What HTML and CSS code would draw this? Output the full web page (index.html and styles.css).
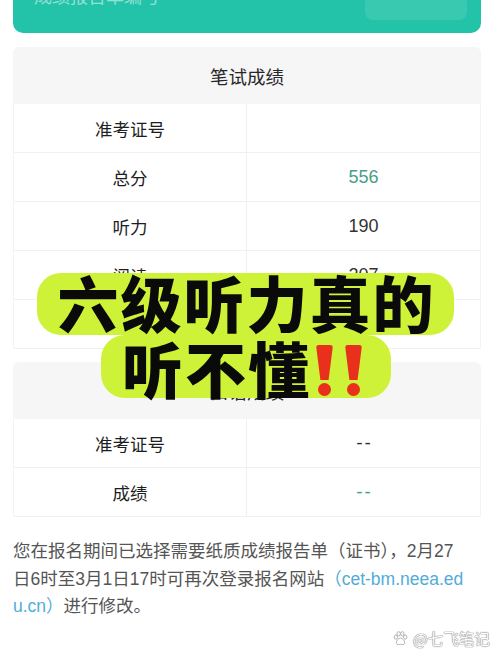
FILE: index.html
```html
<!DOCTYPE html>
<html lang="zh-CN">
   <head>
      <meta charset="UTF-8"/>
      <title>成绩查询</title>
      <link rel="stylesheet" href="styles.css">
   </head>

   <body>
      <div class="page">
         <div class="report-bar">
            <span class="report-label">成绩报告单编号</span>
            <span class="report-btn"></span>
         </div>

         <div class="score-block">
            <div class="score-head">笔试成绩</div>
            <div class="score-rows">
               <div class="score-row">
                  <div class="cell label">准考证号</div>
                  <div class="cell value"></div>
               </div>
               <div class="score-row">
                  <div class="cell label">总分</div>
                  <div class="cell value green">556</div>
               </div>
               <div class="score-row">
                  <div class="cell label">听力</div>
                  <div class="cell value">190</div>
               </div>
               <div class="score-row">
                  <div class="cell label">阅读</div>
                  <div class="cell value">207</div>
               </div>
               <div class="score-row">
                  <div class="cell label">写作和翻译</div>
                  <div class="cell value">159</div>
               </div>
            </div>
         </div>

         <div class="score-block second">
            <div class="score-head">口语成绩</div>
            <div class="score-rows">
               <div class="score-row">
                  <div class="cell label">准考证号</div>
                  <div class="cell value dash">--</div>
               </div>
               <div class="score-row">
                  <div class="cell label">成绩</div>
                  <div class="cell value dash green">--</div>
               </div>
            </div>
         </div>

         <p class="notice">
            您在报名期间已选择需要纸质成绩报告单（证书），2月27<br>日6时至3月1日17时可再次登录报名网站<span class="link">（cet-bm.neea.ed<br>u.cn）</span>进行修改。
         </p>

         <div class="sticker">
            <div class="sticker-line first">六级听力真的</div>
            <div class="sticker-line second">
               <span class="sticker-text">听不懂</span>
               <span class="bang" title="!!">
                  <span class="mark"></span>
                  <span class="mark"></span>
               </span>
            </div>
         </div>
      </div>

      <div class="watermark">
         <svg class="paw" width="15" height="15" viewBox="0 0 16 16">
            <ellipse cx="3" cy="6.5" rx="1.8" ry="2.2"/>
            <ellipse cx="6" cy="3" rx="1.8" ry="2.3"/>
            <ellipse cx="10" cy="3" rx="1.8" ry="2.3"/>
            <ellipse cx="13" cy="6.5" rx="1.8" ry="2.2"/>
            <path d="M8 7.5c-2 0-4.5 3-4.5 5 0 1.6 1.4 2 2.4 2 .9 0 1.3-.4 2.1-.4s1.2.4 2.1.4c1 0 2.4-.4 2.4-2 0-2-2.5-5-4.5-5z"/>
         </svg>
         <span>@七飞笔记</span>
      </div>
   </body>
</html>
```

FILE: styles.css
```css
html, body { margin: 0; padding: 0; background: #ffffff; }

body {
   font-family: "Liberation Sans", "Noto Sans CJK SC", sans-serif;
   color: #333333;
   position: relative;
   height: 657px;
   overflow: hidden;
}

.page {
   width: 468px;
   margin-left: 13px;
   position: relative;
}

.report-bar {
   height: 33px;
   background: #22c3a8;
   border-radius: 0 0 10px 10px;
   display: flex;
   justify-content: space-between;
   padding: 0 14px 0 21px;
   overflow: hidden;
}

.report-label {
   margin-top: -16px;
   font-size: 18px;
   line-height: 26px;
   color: rgba(255, 255, 255, 0.5);
}

.report-btn {
   width: 102px;
   height: 40px;
   margin-top: -20px;
   background: rgba(255, 255, 255, 0.1);
   border-radius: 8px;
}

.score-block {
   margin-top: 14px;
}

.score-block.second {
   margin-top: 13px;
}

.score-head {
   height: 57px;
   background: #f6f6f6;
   border-radius: 6px 6px 0 0;
   display: flex;
   align-items: center;
   justify-content: center;
   font-size: 18.5px;
   color: #262626;
}

.score-rows {
   border-left: 1px solid #f3f3f3;
   border-right: 1px solid #f3f3f3;
}

.score-row {
   display: grid;
   grid-template-columns: 233px 1fr;
   height: 48px;
   border-bottom: 1px solid #f0f0f0;
}

.cell {
   display: flex;
   align-items: center;
   justify-content: center;
   font-size: 17.5px;
}

.label {
   border-right: 1px solid #f0f0f0;
   color: #1e1e1e;
}

.value {
   font-size: 18px;
   color: #333333;
}

.dash {
   letter-spacing: 2px;
   padding-left: 2px;
   font-size: 19px;
}

.green {
   color: #4a9e86;
}

.notice {
   margin: 21px 0 0;
   font-size: 17.5px;
   line-height: 27.5px;
   color: #555555;
}

.link {
   color: #52acd9;
}

.sticker {
   position: absolute;
   left: 24px;
   top: 273px;
   width: 417px;
   display: flex;
   flex-direction: column;
   align-items: center;
   font-family: "Noto Sans CJK SC", sans-serif;
   font-weight: 900;
   color: #0a0a0a;
}

.sticker-line {
   background: #cef238;
   border-radius: 24px;
   font-size: 61px;
   letter-spacing: 2px;
}

.sticker-line.first {
   height: 62px;
   line-height: 58px;
   padding: 0 18px 0 20px;
}

.sticker-line.second {
   height: 63px;
   display: flex;
   align-items: flex-start;
   padding: 0 29px 0 21px;
   margin-left: 1px;
}

.sticker-text {
   line-height: 66px;
}

.bang {
   display: flex;
   gap: 12px;
   margin: 10px 0 0 5px;
}

.mark {
   width: 17px;
   height: 51px;
   position: relative;
}

.mark::before {
   content: "";
   position: absolute;
   left: 0;
   top: 0;
   width: 17px;
   height: 35px;
   background: #e8301c;
   border-radius: 3px 3px 0 0;
   clip-path: polygon(0 0, 100% 0, 74% 100%, 26% 100%);
}

.mark::after {
   content: "";
   position: absolute;
   left: 2px;
   bottom: 0;
   width: 13px;
   height: 13px;
   border-radius: 50%;
   background: #e8301c;
}

.watermark {
   position: absolute;
   left: 393px;
   top: 628px;
   display: flex;
   align-items: center;
   gap: 5px;
   font-family: "Noto Sans CJK SC", sans-serif;
   font-size: 15.5px;
   line-height: 20px;
   color: #ffffff;
   text-shadow: 0 0 1px #888888, 0 0 1px #888888, 0 0 1px #888888;
}

.paw {
   fill: #ffffff;
   stroke: #999999;
   stroke-width: 0.8;
}
```
